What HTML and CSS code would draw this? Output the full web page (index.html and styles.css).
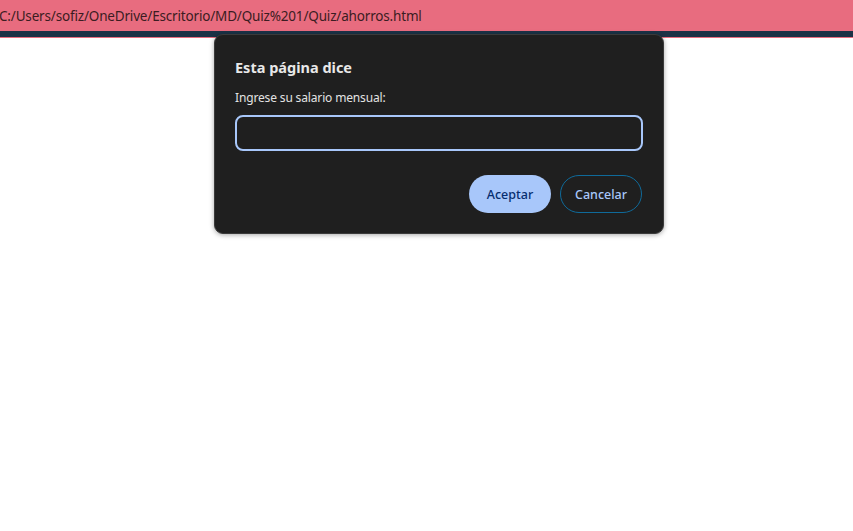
FILE: index.html
```html
<!DOCTYPE html>
<html lang="es">
<head>
<meta charset="utf-8">
<title>ahorros</title>
<link rel="stylesheet" href="styles.css">
</head>
<body>
<div class="urlbar"><span class="url">C:/Users/sofiz/OneDrive/Escritorio/MD/Quiz%201/Quiz/ahorros.html</span></div>
<div class="navyline"></div>
<div class="pinkline"></div>
<div class="page">
  <div class="dialog">
    <h1 class="title">Esta página dice</h1>
    <p class="msg">Ingrese su salario mensual:</p>
    <div class="input"></div>
    <div class="actions">
      <button class="btn primary">Aceptar</button>
      <button class="btn secondary">Cancelar</button>
    </div>
  </div>
</div>
</body>
</html>
```
FILE: styles.css
```css
html, body {
  margin: 0;
  padding: 0;
  background: #ffffff;
  height: 100%;
  overflow: hidden;
}
body {
  font-family: "Noto Sans", "Open Sans", sans-serif;
}
.urlbar {
  height: 31px;
  background: #e86c7f;
  display: flex;
  align-items: center;
}
.url {
  font-size: 13.5px;
  color: #3b1c22;
  margin-left: -1px;
  letter-spacing: -0.17px;
}
.navyline {
  height: 6px;
  background: #1b3246;
}
.pinkline {
  height: 1px;
  background: #e86c7f;
}
.page {
  position: relative;
}
.dialog {
  position: absolute;
  left: 214px;
  top: -4px;
  width: 450px;
  height: 200px;
  box-sizing: border-box;
  background: #1f1f1f;
  border: 1px solid #3a3a3a;
  border-radius: 9px;
  box-shadow: 0 1px 5px rgba(0,0,0,0.35);
  padding: 20px 20px 0 20px;
}
.title {
  margin: 0;
  font-size: 14.5px;
  font-weight: 700;
  color: #e8e8e8;
  line-height: 24px;
}
.msg {
  margin: 9px 0 0 0;
  font-size: 12px;
  letter-spacing: -0.15px;
  color: #e3e3e3;
  line-height: 20px;
}
.input {
  margin-top: 7px;
  height: 36px;
  box-sizing: border-box;
  border: 2px solid #a8c7fa;
  border-radius: 8px;
  background: #1f1f1f;
}
.actions {
  display: flex;
  justify-content: flex-end;
  gap: 9px;
  margin-top: 24px;
  padding-right: 1px;
}
.btn {
  width: 82px;
  height: 38px;
  border-radius: 19px;
  font-family: "Noto Sans", "Open Sans", sans-serif;
  font-size: 12.5px;
  font-weight: 500;
  box-sizing: border-box;
  padding: 0;
}
.primary {
  background: #a8c7fa;
  color: #062e6f;
  border: none;
}
.secondary {
  background: transparent;
  color: #a8c7fa;
  border: 1px solid #0f6a9a;
}
```
